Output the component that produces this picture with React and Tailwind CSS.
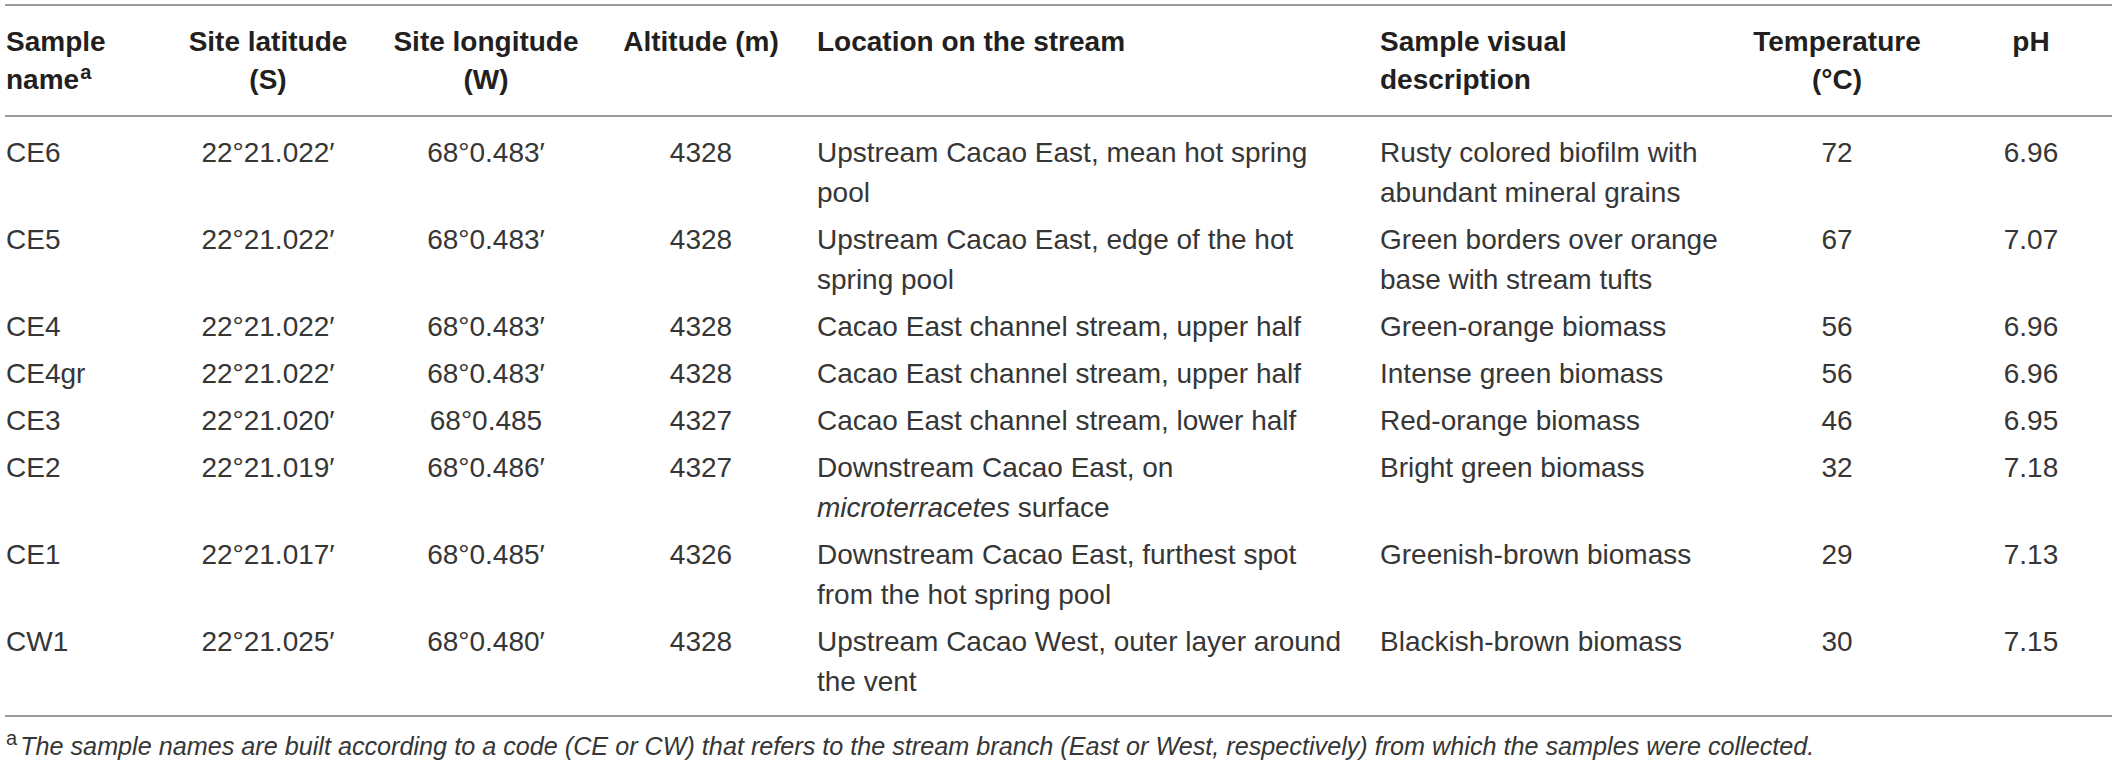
const rows = [
  { name: 'CE6', lat: '22°21.022′', lon: '68°0.483′', alt: '4328', loc: 'Upstream Cacao East, mean hot spring pool', desc: 'Rusty colored biofilm with abundant mineral grains', temp: '72', ph: '6.96' },
  { name: 'CE5', lat: '22°21.022′', lon: '68°0.483′', alt: '4328', loc: 'Upstream Cacao East, edge of the hot spring pool', desc: 'Green borders over orange base with stream tufts', temp: '67', ph: '7.07' },
  { name: 'CE4', lat: '22°21.022′', lon: '68°0.483′', alt: '4328', loc: 'Cacao East channel stream, upper half', desc: 'Green-orange biomass', temp: '56', ph: '6.96' },
  { name: 'CE4gr', lat: '22°21.022′', lon: '68°0.483′', alt: '4328', loc: 'Cacao East channel stream, upper half', desc: 'Intense green biomass', temp: '56', ph: '6.96' },
  { name: 'CE3', lat: '22°21.020′', lon: '68°0.485', alt: '4327', loc: 'Cacao East channel stream, lower half', desc: 'Red-orange biomass', temp: '46', ph: '6.95' },
  {
    name: 'CE2', lat: '22°21.019′', lon: '68°0.486′', alt: '4327',
    loc: <>Downstream Cacao East, on <i>microterracetes</i> surface</>,
    desc: 'Bright green biomass', temp: '32', ph: '7.18',
  },
  { name: 'CE1', lat: '22°21.017′', lon: '68°0.485′', alt: '4326', loc: 'Downstream Cacao East, furthest spot from the hot spring pool', desc: 'Greenish-brown biomass', temp: '29', ph: '7.13' },
  { name: 'CW1', lat: '22°21.025′', lon: '68°0.480′', alt: '4328', loc: 'Upstream Cacao West, outer layer around the vent', desc: 'Blackish-brown biomass', temp: '30', ph: '7.15' },
];

// column widths measured off the reference, 2107px total
const grid = 'grid grid-cols-[170px_186px_250px_180px_589px_362px_190px_180px]';

export default function App() {
  return (
    <div className="w-[2117px] h-[766px] bg-white px-[5px] pt-[4px] font-['Liberation_Sans',Arial,sans-serif] text-[28px]">
      <div className="border-t-2 border-[#9a9a9a]">
        <div className={`${grid} border-b-2 border-[#9a9a9a] pt-[17px] pb-[16px] font-bold leading-[38px] text-[#231f20]`}>
          <div className="pl-[1px]">Sample<br />name<sup className="text-[20px] font-bold ml-[1px] -top-[10px]">a</sup></div>
          <div className="text-center">Site latitude<br />(S)</div>
          <div className="text-center">Site longitude<br />(W)</div>
          <div className="text-center">Altitude (m)</div>
          <div className="pl-[26px] pr-[31px]">Location on the stream</div>
          <div className="pr-[21px]">Sample visual<br />description</div>
          <div className="text-center">Temperature<br />(°C)</div>
          <div className="pl-[18px] text-center">pH</div>
        </div>

        <div className="border-b-2 border-[#9a9a9a] pt-[16px] pb-[6px] leading-[40px] text-[#363636]">
          {rows.map((r) => (
            <div key={r.name} className={`${grid} pb-[7px]`}>
              <div className="pl-[1px]">{r.name}</div>
              <div className="text-center">{r.lat}</div>
              <div className="text-center">{r.lon}</div>
              <div className="text-center">{r.alt}</div>
              <div className="pl-[26px] pr-[31px]">{r.loc}</div>
              <div className="pr-[21px]">{r.desc}</div>
              <div className="text-center">{r.temp}</div>
              <div className="pl-[18px] text-center">{r.ph}</div>
            </div>
          ))}
        </div>

        <p className="pt-[14px] text-[25.2px] leading-[30px] text-[#363636]">
          <sup className="text-[20px] -top-[10px] ml-[1px] mr-[3px]">a</sup>
          <i>The sample names are built according to a code (CE or CW) that refers to the stream branch (East or West, respectively) from which the samples were collected.</i>
        </p>
      </div>
    </div>
  );
}
